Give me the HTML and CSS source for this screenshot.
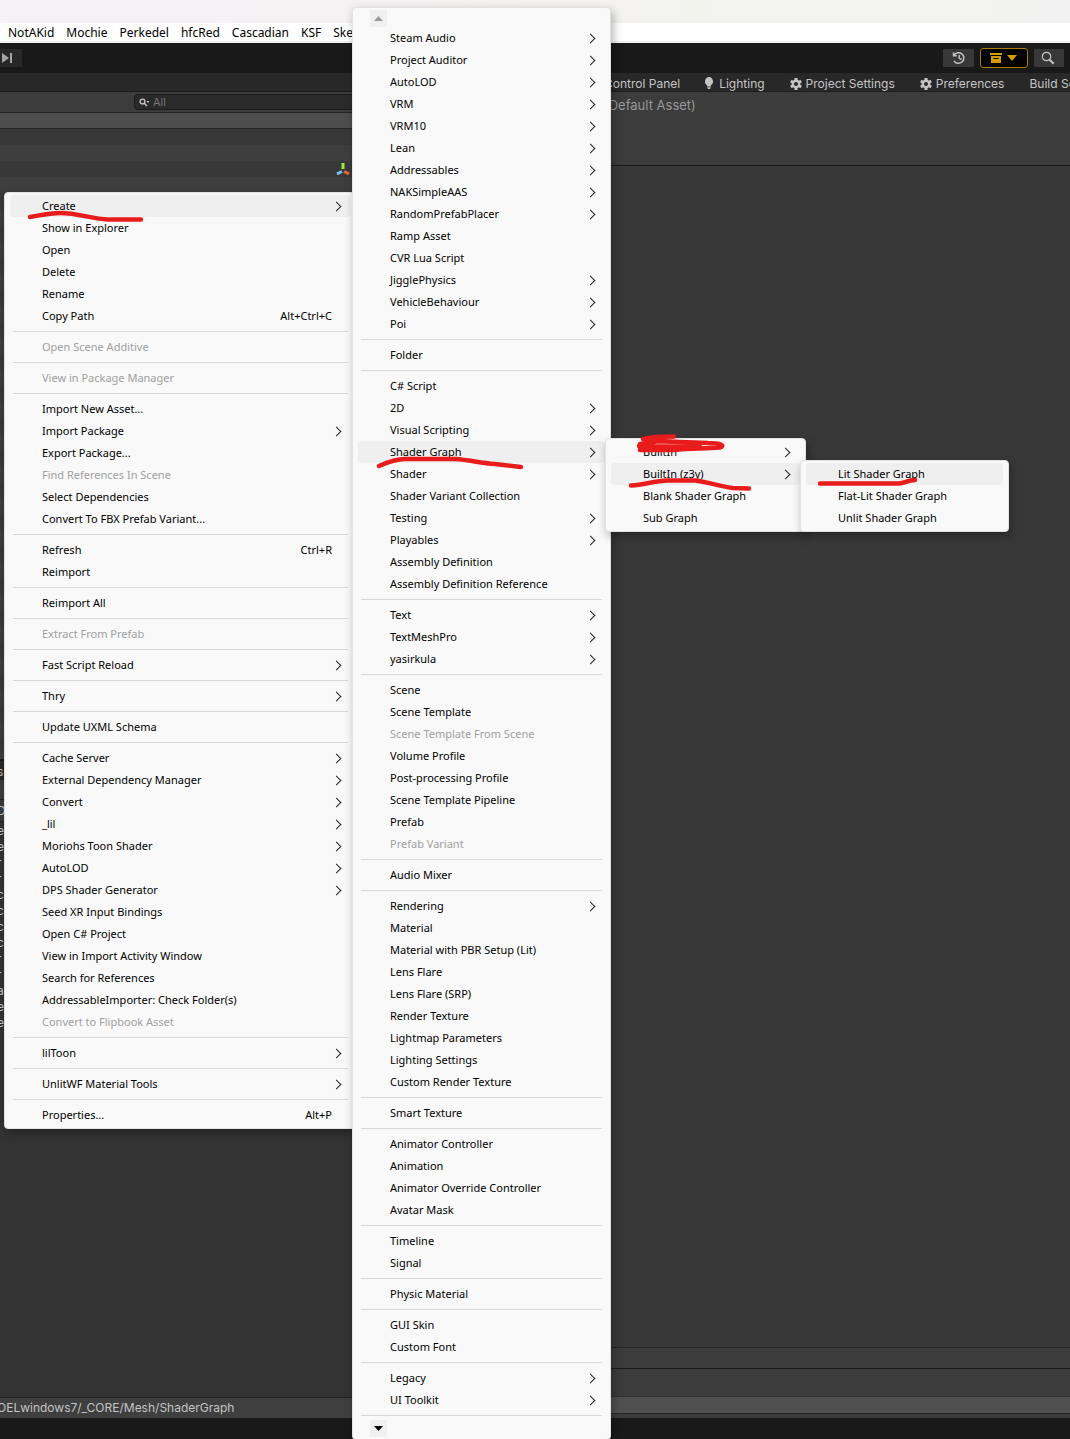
FILE: index.html
```html
<!DOCTYPE html>
<html lang="en">
<head>
<meta charset="utf-8">
<title>ShaderGraph - Unity Editor</title>
<link rel="stylesheet" href="styles.css">
</head>
<body>
<div class="editor">
  <div class="titlebar"></div>
  <nav class="menubar">
    <button>NotAKid</button><button>Mochie</button><button>Perkedel</button><button>hfcRed</button><button>Cascadian</button><button>KSF</button><button>Sket</button>
  </nav>
  <div class="toolbar">
    <button class="tool step" aria-label="Step"><svg width="12" height="12" viewBox="0 0 12 12"><path d="M1 1l7 5-7 5zM9 1h2v10H9z" fill="#a5a5a5"/></svg></button>
    <button class="tool history" aria-label="Undo history"><svg width="14" height="14" viewBox="0 0 14 14" fill="none" stroke="#c4c4c4" stroke-width="1.5"><path d="M2 4.2A5.3 5.3 0 1 1 2 9.8M1.5 1.5v3.3h3.3M7.3 4v3.4l2.3 1.2"/></svg></button>
    <button class="tool archive" aria-label="Package"><svg width="28" height="12" viewBox="0 0 28 12" fill="#d09c00"><path d="M0 1h12v2H0zM1 4h10v7H1z"/><path d="M3.5 6.5h5" stroke="#000"/><path d="M17 3h10l-5 6z"/></svg></button>
    <button class="tool find" aria-label="Search"><svg width="14" height="14" viewBox="0 0 14 14" fill="none" stroke="#c4c4c4"><circle cx="5.5" cy="5.5" r="4.2" stroke-width="1.2"/><path d="M8.7 8.7l4 4" stroke-width="2"/></svg></button>
  </div>
  <main class="workspace">
    <section class="left">
      <div class="hierarchy">
        <div class="strip"></div>
        <div class="searchbar">
          <label class="search"><svg width="11" height="9" viewBox="0 0 11 9" fill="none" stroke="#c4c4c4"><circle cx="3.5" cy="3.5" r="2.4" stroke-width="1.4"/><path d="M5.3 5.3L8 8" stroke-width="1.5"/><path d="M7.5 3h3L9 5z" fill="#c4c4c4" stroke="none"/></svg><input type="text" placeholder="All" aria-label="Search hierarchy"></label>
        </div>
        <div class="scene-row"></div>
        <div class="tree">
          <svg class="gizmo" width="14" height="14" viewBox="0 0 14 14" fill="none" stroke-width="3"><path d="M7 0v6" stroke="#9be84b"/><path d="M6 8.500l-5 2.300" stroke="#6fc6f0"/><path d="M8 8.500l5 2.300" stroke="#f0643a"/></svg>
        </div>
      </div>
      <div class="project">
        <div class="project-tab">s</div>
        <div class="project-tools"></div>
        <div class="project-head">D</div>
        <ul class="files"><li>e</li><li>e</li><li>r</li><li>r</li><li>c</li><li>c</li><li>c</li><li>c</li><li>r</li><li>r</li><li>a</li><li>es</li><li>es</li></ul>
        <div class="path">OELwindows7/_CORE/Mesh/ShaderGraph</div>
      </div>
    </section>
    <section class="right">
      <div class="tabs">
        <a href="#" class="control">Control Panel</a>
        <a href="#" class="lighting"><svg width="10" height="13" viewBox="0 0 10 13" fill="#c4c4c4"><path d="M5 0a4.500 4.500 0 0 1 2 8.200V9.500h-4V8.200A4.500 4.500 0 0 1 5 0zM3 10.300h4L6 12H4z"/></svg>Lighting</a>
        <a href="#" class="settings"><svg width="12" height="12" viewBox="-6 -6 12 12"><g fill="#c4c4c4"><path d="M-1.500-6h3v12h-3z"/><path d="M-1.500-6h3v12h-3z" transform="rotate(60)"/><path d="M-1.500-6h3v12h-3z" transform="rotate(120)"/><circle r="4.400"/></g><circle r="2" fill="#282828"/></svg>Project Settings</a>
        <a href="#" class="prefs"><svg width="12" height="12" viewBox="-6 -6 12 12"><g fill="#c4c4c4"><path d="M-1.500-6h3v12h-3z"/><path d="M-1.500-6h3v12h-3z" transform="rotate(60)"/><path d="M-1.500-6h3v12h-3z" transform="rotate(120)"/><circle r="4.400"/></g><circle r="2" fill="#282828"/></svg>Preferences</a>
        <a href="#" class="build">Build Settings</a>
      </div>
      <div class="asset-head">(Default Asset)</div>
      <div class="inspector"></div>
      <div class="asset-labels"></div>
      <div class="preview"></div>
      <div class="bundle"></div>
      <div class="edge"></div>
    </section>
  </main>
  <footer class="statusbar"></footer>
</div>

<ul class="menu context" role="menu">
  <li><button class="sub on">Create</button></li>
  <li><button>Show in Explorer</button></li>
  <li><button>Open</button></li>
  <li><button>Delete</button></li>
  <li><button>Rename</button></li>
  <li><button>Copy Path<kbd>Alt+Ctrl+C</kbd></button></li>
  <li class="sep"></li>
  <li><button disabled>Open Scene Additive</button></li>
  <li class="sep"></li>
  <li><button disabled>View in Package Manager</button></li>
  <li class="sep"></li>
  <li><button>Import New Asset...</button></li>
  <li><button class="sub">Import Package</button></li>
  <li><button>Export Package...</button></li>
  <li><button disabled>Find References In Scene</button></li>
  <li><button>Select Dependencies</button></li>
  <li><button>Convert To FBX Prefab Variant...</button></li>
  <li class="sep"></li>
  <li><button>Refresh<kbd>Ctrl+R</kbd></button></li>
  <li><button>Reimport</button></li>
  <li class="sep"></li>
  <li><button>Reimport All</button></li>
  <li class="sep"></li>
  <li><button disabled>Extract From Prefab</button></li>
  <li class="sep"></li>
  <li><button class="sub">Fast Script Reload</button></li>
  <li class="sep"></li>
  <li><button class="sub">Thry</button></li>
  <li class="sep"></li>
  <li><button>Update UXML Schema</button></li>
  <li class="sep"></li>
  <li><button class="sub">Cache Server</button></li>
  <li><button class="sub">External Dependency Manager</button></li>
  <li><button class="sub">Convert</button></li>
  <li><button class="sub">_lil</button></li>
  <li><button class="sub">Moriohs Toon Shader</button></li>
  <li><button class="sub">AutoLOD</button></li>
  <li><button class="sub">DPS Shader Generator</button></li>
  <li><button>Seed XR Input Bindings</button></li>
  <li><button>Open C# Project</button></li>
  <li><button>View in Import Activity Window</button></li>
  <li><button>Search for References</button></li>
  <li><button>AddressableImporter: Check Folder(s)</button></li>
  <li><button disabled>Convert to Flipbook Asset</button></li>
  <li class="sep"></li>
  <li><button class="sub">lilToon</button></li>
  <li class="sep"></li>
  <li><button class="sub">UnlitWF Material Tools</button></li>
  <li class="sep"></li>
  <li><button>Properties...<kbd>Alt+P</kbd></button></li>
</ul>

<ul class="menu create" role="menu">
  <li class="scroll"><button class="arrow" aria-label="Scroll up"><svg width="9" height="5" viewBox="0 0 9 5"><path d="M0 5l4.500-5L9 5z" fill="#999"/></svg></button></li>
  <li><button class="sub">Steam Audio</button></li>
  <li><button class="sub">Project Auditor</button></li>
  <li><button class="sub">AutoLOD</button></li>
  <li><button class="sub">VRM</button></li>
  <li><button class="sub">VRM10</button></li>
  <li><button class="sub">Lean</button></li>
  <li><button class="sub">Addressables</button></li>
  <li><button class="sub">NAKSimpleAAS</button></li>
  <li><button class="sub">RandomPrefabPlacer</button></li>
  <li><button>Ramp Asset</button></li>
  <li><button>CVR Lua Script</button></li>
  <li><button class="sub">JigglePhysics</button></li>
  <li><button class="sub">VehicleBehaviour</button></li>
  <li><button class="sub">Poi</button></li>
  <li class="sep"></li>
  <li><button>Folder</button></li>
  <li class="sep"></li>
  <li><button>C# Script</button></li>
  <li><button class="sub">2D</button></li>
  <li><button class="sub">Visual Scripting</button></li>
  <li><button class="sub on">Shader Graph</button></li>
  <li><button class="sub">Shader</button></li>
  <li><button>Shader Variant Collection</button></li>
  <li><button class="sub">Testing</button></li>
  <li><button class="sub">Playables</button></li>
  <li><button>Assembly Definition</button></li>
  <li><button>Assembly Definition Reference</button></li>
  <li class="sep"></li>
  <li><button class="sub">Text</button></li>
  <li><button class="sub">TextMeshPro</button></li>
  <li><button class="sub">yasirkula</button></li>
  <li class="sep"></li>
  <li><button>Scene</button></li>
  <li><button>Scene Template</button></li>
  <li><button disabled>Scene Template From Scene</button></li>
  <li><button>Volume Profile</button></li>
  <li><button>Post-processing Profile</button></li>
  <li><button>Scene Template Pipeline</button></li>
  <li><button>Prefab</button></li>
  <li><button disabled>Prefab Variant</button></li>
  <li class="sep"></li>
  <li><button>Audio Mixer</button></li>
  <li class="sep"></li>
  <li><button class="sub">Rendering</button></li>
  <li><button>Material</button></li>
  <li><button>Material with PBR Setup (Lit)</button></li>
  <li><button>Lens Flare</button></li>
  <li><button>Lens Flare (SRP)</button></li>
  <li><button>Render Texture</button></li>
  <li><button>Lightmap Parameters</button></li>
  <li><button>Lighting Settings</button></li>
  <li><button>Custom Render Texture</button></li>
  <li class="sep"></li>
  <li><button>Smart Texture</button></li>
  <li class="sep"></li>
  <li><button>Animator Controller</button></li>
  <li><button>Animation</button></li>
  <li><button>Animator Override Controller</button></li>
  <li><button>Avatar Mask</button></li>
  <li class="sep"></li>
  <li><button>Timeline</button></li>
  <li><button>Signal</button></li>
  <li class="sep"></li>
  <li><button>Physic Material</button></li>
  <li class="sep"></li>
  <li><button>GUI Skin</button></li>
  <li><button>Custom Font</button></li>
  <li class="sep"></li>
  <li><button class="sub">Legacy</button></li>
  <li><button class="sub">UI Toolkit</button></li>
  <li class="sep"></li>
  <li class="scroll"><button class="arrow" aria-label="Scroll down"><svg width="9" height="5" viewBox="0 0 9 5"><path d="M0 0l4.500 5L9 0z" fill="#000"/></svg></button></li>
</ul>

<ul class="menu graph" role="menu">
  <li><button class="sub">BuiltIn</button></li>
  <li><button class="sub on">BuiltIn (z3y)</button></li>
  <li><button>Blank Shader Graph</button></li>
  <li><button>Sub Graph</button></li>
</ul>

<ul class="menu lit" role="menu">
  <li><button class="on">Lit Shader Graph</button></li>
  <li><button>Flat-Lit Shader Graph</button></li>
  <li><button>Unlit Shader Graph</button></li>
</ul>

<svg class="ink" width="1070" height="600" viewBox="0 0 1070 600" fill="none" stroke="#e81c1c" stroke-width="4.500" stroke-linecap="round" stroke-linejoin="round">
  <path d="M30 217C42 215 50 213 60 213C78 213 92 219 108 219.500L141 219.500"/>
  <path d="M379 466C388 462 396 459 405 459L455 459C470 460 480 463 495 464L521 467"/>
  <path d="M631 485.500C645 485 653 481 668 480.500L695 480.500C709 482 722 487 733 488L749 488.500"/>
  <path d="M820 483.500L899 483.500C905 483 908 480 915 480"/>
  <path d="M643 439L655 437L674 436.500M640 444L660 441L680 442L708 443C722 443 725 446 720 447.500C705 449 690 448 675 450L640 450M639 446L700 447M640 448L690 448M650 441L680 442"/>
</svg>
</body>
</html>
```
FILE: styles.css
```css
* { box-sizing: border-box; }
body { margin: 0; position: relative; overflow: hidden; background: #191919; font: 12px/16px Inter, sans-serif; color: #c4c4c4; }
ul { list-style: none; margin: 0; padding: 0; }
button { font: inherit; color: inherit; border: 0; background: none; padding: 0; }
svg { flex: none; display: block; }
a { color: inherit; text-decoration: none; }

.editor { min-height: 100vh; display: flex; flex-direction: column; }
.titlebar { height: 23px; background: linear-gradient(90deg, #f6f0f7, #f3f3ee 65%, #f2f2f2); }
.menubar { height: 20px; background: #fff; border-bottom: 2px solid #f0f0f0; color: #000; font: 12px/20px "Noto Sans", sans-serif; display: flex; gap: 12px; padding-left: 8px; }
.toolbar { height: 30px; background: #191919; display: flex; align-items: center; }
.tool { height: 18px; background: #383838; display: flex; align-items: center; justify-content: center; }
.step { width: 22px; padding-right: 8px; background: #282828; }
.history { width: 31px; margin-left: auto; margin-right: 6px; }
.archive { width: 48px; height: 20px; background: #000; border: 1px solid #a87d00; border-radius: 3px; margin-right: 6px; }
.find { width: 30px; padding-right: 2px; margin-right: 6px; }

.workspace { flex: 1; display: grid; grid-template-columns: 590px 1fr; }
.left { display: grid; grid-template-rows: 51fr 49fr; background: #333; }
.hierarchy, .project, .right { display: flex; flex-direction: column; min-width: 0; }
.strip { height: 19px; background: #282828; border-bottom: 1px solid #1b1b1b; }
.searchbar { height: 21px; background: #3c3c3c; border-bottom: 1px solid #232323; padding: 2px 0 2px 134px; }
.search { display: flex; align-items: center; gap: 3px; height: 16px; padding-left: 4px; background: #2a2a2a; border: 1px solid #1c1c1c; border-radius: 4px; }
.search input { flex: 1; min-width: 0; height: 14px; padding: 0; border: 0; background: none; color: #c4c4c4; font: 11px/14px Inter, sans-serif; }
.search input::placeholder { color: #757575; }
.scene-row { height: 16px; background: #4d4d4d; border-bottom: 1px solid #232323; }
.tree { flex: 1; padding: 34px 0 0 336px; background: repeating-linear-gradient(#383838 0 16px, #3e3e3e 16px 32px); }
.project { text-indent: -3px; }
.project-tab { height: 21px; padding-top: 3px; background: #282828; border-top: 2px solid #191919; }
.project-tools { height: 20px; background: #3c3c3c; border-bottom: 1px solid #232323; }
.project-head { height: 22px; padding-top: 3px; background: #3c3c3c; border-bottom: 1px solid #282828; }
.files { flex: 1; padding-top: 1px; }
.files li { height: 16px; }
.path { height: 21px; background: #3f3f3f; border-top: 1px solid #232323; line-height: 20px; }

.tabs { display: flex; height: 19px; padding: 3px 0 0 14px; background: #282828; border-bottom: 1px solid #1f1f1f; line-height: 16px; white-space: nowrap; overflow: hidden; }
.tabs a { display: flex; flex: none; align-items: center; gap: 4px; }
.tabs .lighting { margin-left: 24px; gap: 5px; }
.tabs .settings, .tabs .prefs { margin-left: 25px; }
.tabs .build { margin-left: 25px; }
.asset-head { height: 74px; padding: 5px 0 0 14px; background: #3c3c3c; border-bottom: 1px solid #191919; color: #989898; font-size: 13px; }
.inspector { flex: 1; background: #383838; }
.asset-labels { height: 22px; background: #3c3c3c; border-top: 1px solid #232323; border-bottom: 1px solid #191919; }
.preview { height: 27px; background: #3c3c3c; }
.bundle { height: 18px; background: #505050; border-top: 1px solid #303030; border-bottom: 1px solid #232323; }
.edge { height: 4px; background: #3c3c3c; }
.statusbar { height: 21px; background: #191919; }

.menu { position: absolute; padding: 2px 5px; background: #f9f9f9; border: 1px solid #e2e2e2; border-radius: 4px; box-shadow: 2px 4px 10px rgba(0, 0, 0, .3); color: #000; font: 11px/22px "Noto Sans", sans-serif; }
.menu button { position: relative; display: flex; align-items: center; width: 100%; height: 22px; padding: 0 19px 0 32px; border-radius: 4px; text-align: left; white-space: nowrap; }
.menu button:disabled { color: #a0a0a0; }
.menu .on { background: #efefef; }
.menu kbd { margin-left: auto; font: inherit; }
.menu .sub::after { content: ""; width: 6px; height: 6px; margin-left: auto; margin-right: -8px; border: solid #222; border-width: 1px 1px 0 0; transform: rotate(45deg); }
.menu .sep { height: 1px; margin: 4px 3px; background: #d8d8d8; }
.menu .scroll { height: 17px; padding-left: 12px; }
.menu .arrow { width: 17px; height: 17px; padding: 0; border-radius: 0; justify-content: center; background: #f0f0f0; }
.context { left: 4px; top: 192px; width: 353px; }
.create { left: 352px; top: 7px; width: 259px; }
.graph { left: 605px; top: 438px; width: 201px; }
.lit { left: 800px; top: 460px; width: 209px; }
.ink { position: absolute; left: 0; top: 0; pointer-events: none; }
```
